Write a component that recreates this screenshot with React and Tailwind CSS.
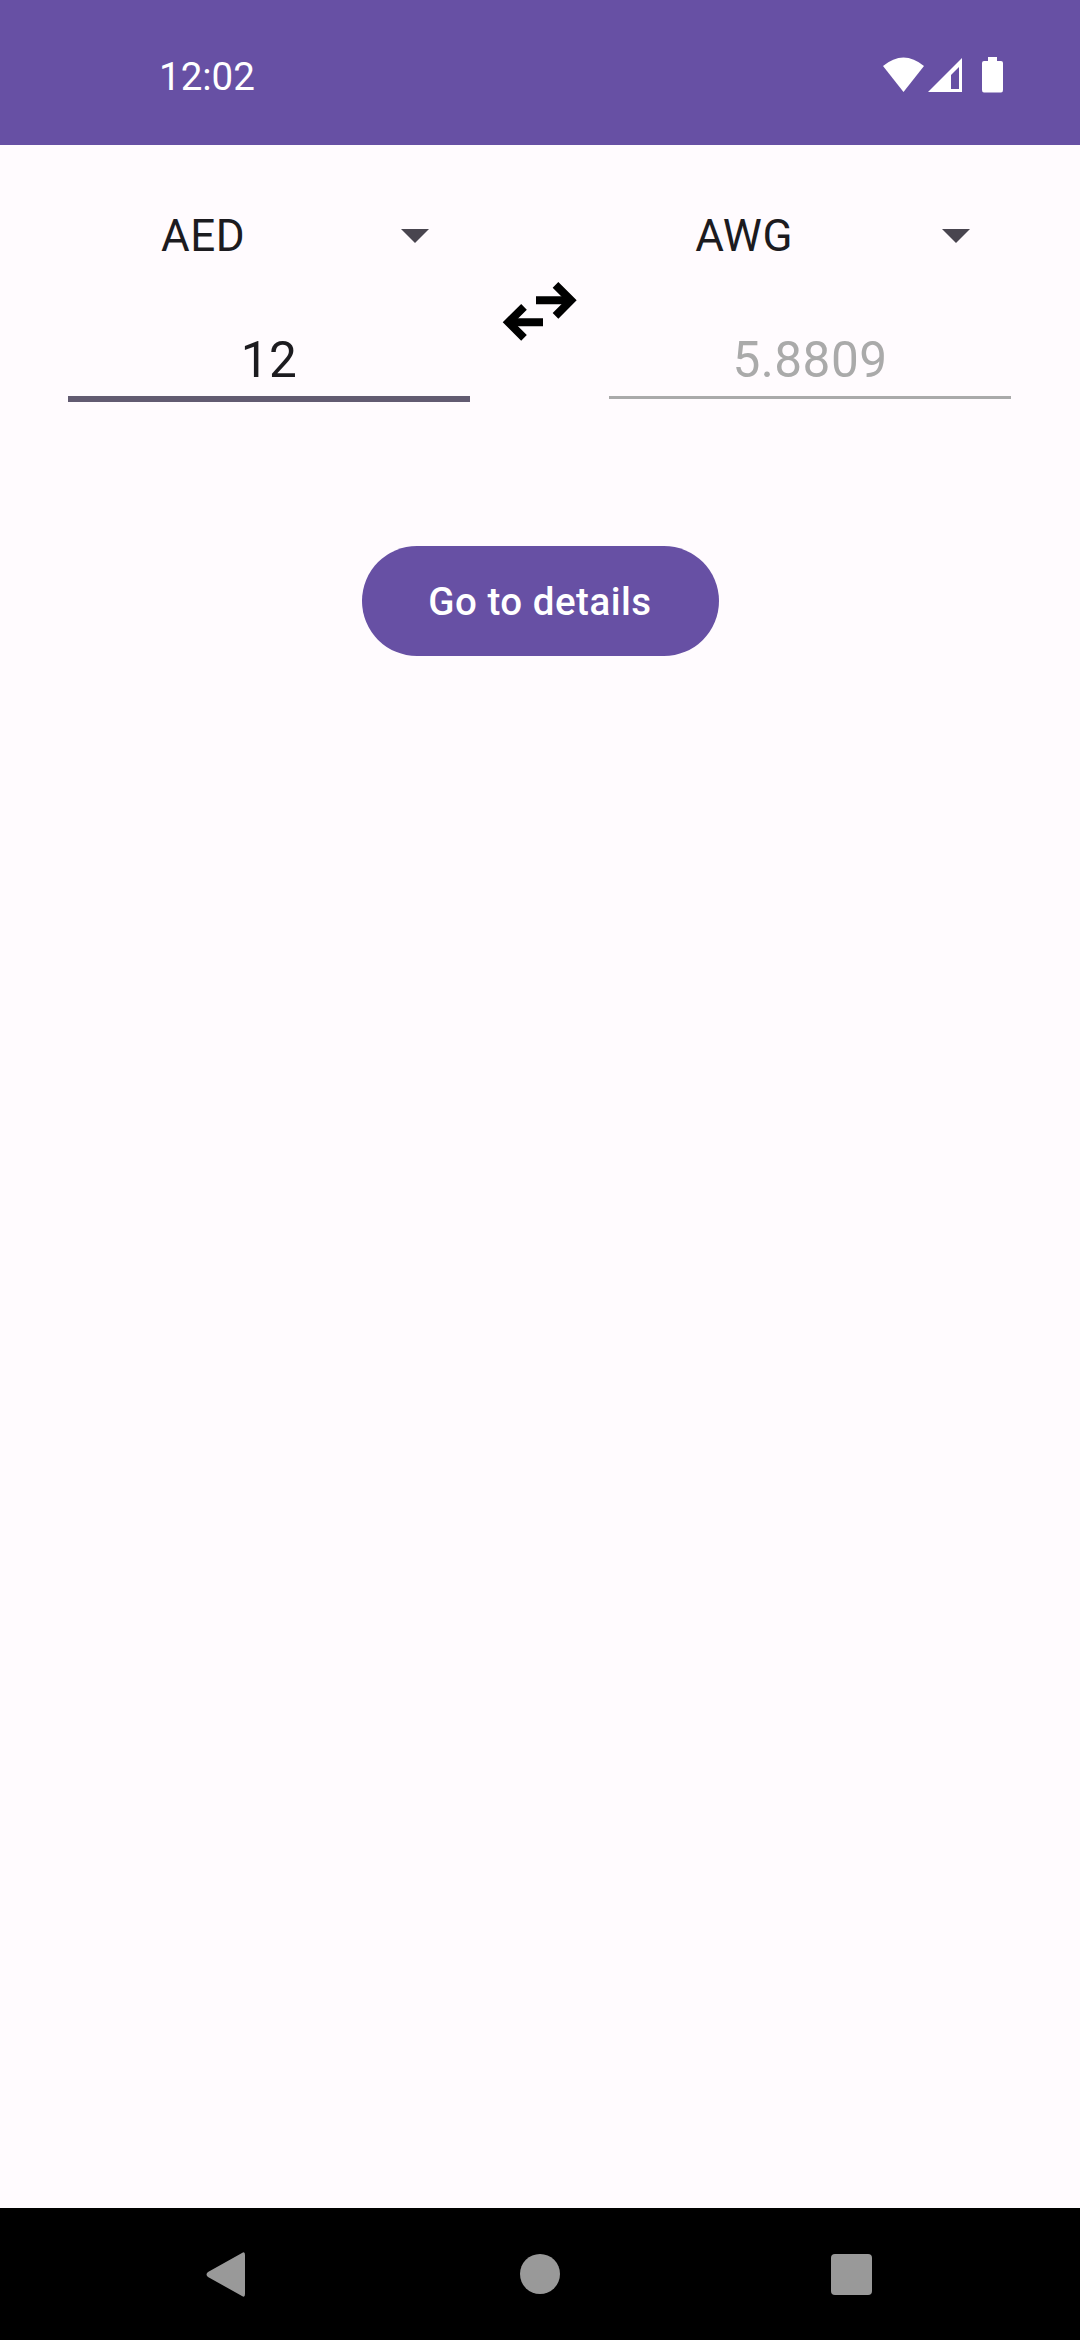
import React from "react";

const roboto = { fontFamily: "Roboto, sans-serif" };

function Caret() {
  return (
    <svg width="28" height="14" viewBox="0 0 28 14" className="ml-[63px]">
      <path d="M0 0H28L14 14Z" fill="#49454f" />
    </svg>
  );
}

function StatusIcons() {
  return (
    <div className="flex items-center">
      <svg width="41" height="36" viewBox="0 0 41 36">
        <path d="M0 9Q20.5 -8 41 9L20.5 35Z" fill="#fff" />
      </svg>
      <svg width="34" height="36" viewBox="0 0 34 36" className="ml-1">
        <path
          fillRule="evenodd"
          d="M0 35L34 1V35ZM23 18V32H31V10Z"
          fill="#fff"
        />
      </svg>
      <svg width="21" height="36" viewBox="0 0 21 36" className="ml-5">
        <path
          d="M6 0H15V4H19Q21 4 21 6V33Q21 35.5 19 35.5H2Q0 35.5 0 33V6Q0 4 2 4H6Z"
          fill="#fff"
        />
      </svg>
    </div>
  );
}

function SwapIcon() {
  return (
    <svg width="80" height="64" viewBox="500 280 80 64">
      <g fill="none" stroke="#000" strokeWidth="8">
        <path d="M536 300.3H570" />
        <path d="M555.5 284.8L571 300.3L555.5 315.8" />
        <path d="M543 322.3H510" />
        <path d="M524 306.8L508.4 322.3L524 337.8" />
      </g>
    </svg>
  );
}

function Converter({ code, value, muted }) {
  return (
    <div className="w-[402px]">
      <div className="flex h-[64px] items-center">
        <span className="w-[270px] text-center text-[44px] leading-none tracking-[0.5px] text-[#1c1b1f]">
          {code}
        </span>
        <Caret />
      </div>
      <div
        className={`mt-[59px] pb-[3px] text-center text-[49.5px] leading-[66px] tracking-[0.5px] ${
          muted
            ? "border-b-[3px] border-[#aaaaaa] text-[#aaaaaa]"
            : "border-b-[6px] border-[#625b71] text-[#1c1b1f]"
        }`}
      >
        {value}
      </div>
    </div>
  );
}

export default function App() {
  return (
    <div className="flex h-[2340px] w-[1080px] flex-col bg-[#fffbfe]" style={roboto}>
      <header className="flex h-[145px] items-start justify-between bg-[#6750a4] pl-[159px] pr-[77px] pt-[57px] text-white">
        <span className="text-[38.5px] leading-[40px]">12:02</span>
        <StatusIcons />
      </header>

      <main className="flex flex-1 flex-col">
        <div className="flex items-start pl-[68px] pt-[59px]">
          <Converter code="AED" value="12" />
          <div className="w-[139px] pl-[30px] pt-[76px]">
            <SwapIcon />
          </div>
          <Converter code="AWG" value="5.8809" muted />
        </div>
        <button className="mx-auto mt-[144px] h-[110px] w-[357px] rounded-full bg-[#6750a4] pt-[2px] text-[38.5px] font-medium tracking-[0.5px] text-white">
          Go to details
        </button>
      </main>

      <nav className="flex h-[132px] items-center bg-black pl-[206px]">
        <svg width="39" height="45" viewBox="0 0 39 45">
          <path
            d="M36 1Q39 -1 39 3V42Q39 46 36 44L2 25Q-1 22.500 2 20Z"
            fill="#999999"
          />
        </svg>
        <div className="ml-[275px] h-[40px] w-[40px] rounded-full bg-[#999999]" />
        <div className="ml-[271px] h-[41px] w-[41px] rounded-[4px] bg-[#999999]" />
      </nav>
    </div>
  );
}
